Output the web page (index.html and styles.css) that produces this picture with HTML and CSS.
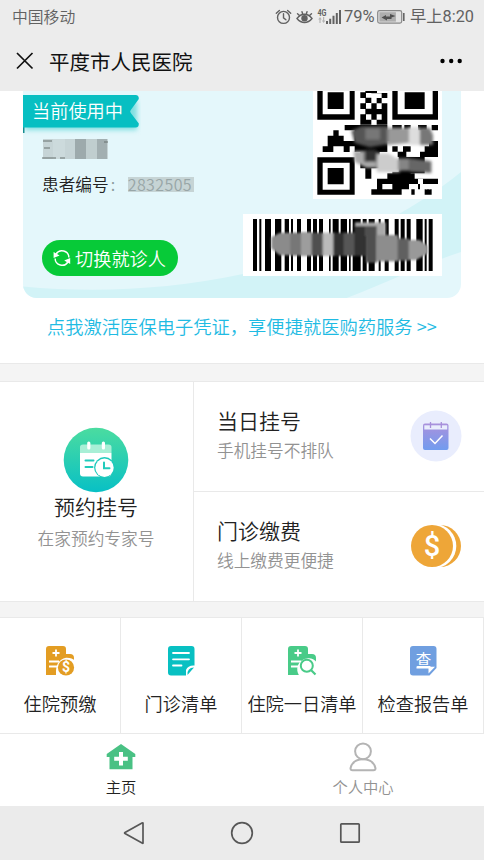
FILE: index.html
```html
<!DOCTYPE html>
<html lang="zh-CN">
<head>
<meta charset="utf-8">
<title>平度市人民医院</title>
<link rel="stylesheet" href="styles.css">
</head>
<body>
<div class="phone">
  <header class="top">
    <div class="status">
      <span class="carrier">中国移动</span>
      <svg class="status-icons" width="68" height="20" viewBox="0 0 68 20">
        <g fill="none" stroke="#616161" stroke-width="1.4" stroke-linecap="round">
          <circle cx="10.5" cy="10.4" r="6"/>
          <path d="M10.5 6.8v4l2.4 2"/>
          <path d="M3.3 6.3 6.4 3.4M17.7 6.3 14.6 3.4"/>
          <path d="M24 11.5c4.400-5.600 10.600-5.600 15 0-4.400 5.400-10.600 5.400-15 0z"/>
          <path d="M24.500 6.800l2 1.800M29 4.700l.6 2M34 4.700l-.6 2M38.500 6.800l-2 1.800"/>
        </g>
        <circle cx="31.500" cy="11.300" r="3.200" fill="#616161"/>
        <text x="44.5" y="8.5" class="net" textLength="9" lengthAdjust="spacingAndGlyphs">4G</text>
        <g fill="#b5b5b5"><path d="M47 10l1.800 2.400H47.600V16h-1.200v-3.600h-1.200zM50.600 16l-1.800-2.400h1.200V10h1.200v3.600h1.200z"/></g>
        <g fill="#616161">
          <path d="M53 14h2v3h-2zM56.200 11.700h2V17h-2zM59.500 8.700h2V17h-2zM62.800 6h2v11h-2zM66 3h2v14h-2z"/>
        </g>
      </svg>
      <span class="percent">79%</span>
      <svg class="battery" width="28" height="14" viewBox="0 0 28 14">
        <rect x=".7" y=".7" width="24" height="12.400" rx="1.800" fill="#e2e2e2" stroke="#888" stroke-width="1.200"/>
        <rect x="2.400" y="2.200" width="16.500" height="9.400" fill="#adadad"/>
        <path d="M4.500 7.500l4.500-2.500v1.500h4V4l5.500 2-4 1.500V9H10v1.500z" fill="#505050"/>
        <rect x="26" y="3" width="1.600" height="8" fill="#666"/>
      </svg>
      <span class="clock">早上8:20</span>
    </div>
    <div class="titlebar">
      <svg width="18" height="18" viewBox="0 0 18 18"><path d="M1 1 16.500 16.500M16.500 1 1 16.500" stroke="#111" stroke-width="1.700" fill="none"/></svg>
      <h1>平度市人民医院</h1>
      <svg class="more" width="24" height="6" viewBox="0 0 24 6"><circle cx="3.500" cy="3" r="2.200"/><circle cx="12.200" cy="3" r="2.200"/><circle cx="20.700" cy="3" r="2.200"/></svg>
    </div>
  </header>

  <section class="patient">
    <div class="card">
      <svg class="waves" width="438" height="208" viewBox="0 0 438 208">
        <path fill="#d2f3f7" d="M0 195.500C70 202 145 199 220 183 300 165 380 128 438 81V161C400 173 362 193 321 208H0z"/>
      </svg>
      <div class="card-left">
        <div class="ribbon">
          <svg width="118" height="50" viewBox="0 0 118 50">
            <defs><filter id="soft" x="-10%" y="-20%" width="120%" height="160%"><feGaussianBlur stdDeviation="2.500"/></filter></defs>
            <path d="M2 10H114V39H2z" fill="#7fdfe0" filter="url(#soft)"/>
            <path d="M0 36H1.500V42H0z" fill="#158d91"/>
            <path d="M0 4H112.500Q116 4 115.800 8L107.800 19Q106.500 20.500 107.800 22L115.800 32.500Q116 36.500 112.500 36.500H0z" fill="#07bfc2"/>
          </svg>
          <span>当前使用中</span>
        </div>
        <svg class="name-mask" width="68" height="22" viewBox="0 0 68 22">
          <rect x="1" y="1" width="65" height="20" fill="#c6d4d6"/>
          <rect x="11" y="1" width="12" height="20" fill="#ccdadc"/>
          <rect x="33" y="1" width="11" height="20" fill="#9daaac"/>
          <rect x="44" y="1" width="11" height="20" fill="#c0cecf"/>
          <rect x="55" y="1" width="10" height="20" fill="#a2afb1"/>
          <path d="M1 3h9M2 10h6M0 20h14M18 20h5M62 4h4" stroke="#66706f" stroke-width="1"/>
        </svg>
        <div class="number">患者编号<i>:</i><span class="digits">2832505</span></div>
        <button class="switch">
          <svg width="18" height="18" viewBox="0 0 18 18"><g fill="none" stroke="#fff" stroke-width="1.400"><path d="M3 5A7 7 0 0 1 15.900 8.500"/><path d="M15 13A7 7 0 0 1 2.100 9.500"/></g><path d="M.6 3v6l6-2.500zM17.200 15V9l-6 2.500z" fill="#fff"/></svg>
          <span>切换就诊人</span>
        </button>
      </div>
      <div class="card-right">
        <svg class="qr" width="129" height="109" viewBox="40 15 387 327">
          <defs><filter id="haze" x="-10%" y="-20%" width="120%" height="140%"><feGaussianBlur stdDeviation="5"/></filter></defs>
          <rect x="40" y="15" width="388" height="328" fill="#fff"/>
          <path fill-rule="evenodd" d="M53 10H165V104H53zM69 10H150V88H69zM278 10H415V104H278zM294 10H399V88H294zM53 217H165V329H53zM69 233H150V314H69z"/>
          <path d="M84 22H132V72H84zM315 22H375V72H315zM84 249H132V298H84z"/>
          <path fill-rule="evenodd" d="M182 22H197V15H232V24H263V39H246V55H263V119H182V88H197V72H182V55H197V39H182zM199 24V38H215V54H199V71H215V55H231V72H246V55H231V39H246V25H215V24zM199 88V104H215V88zM231 88V104H246V88zM215 104V119H231V104z"/>
          <path d="M135 120H165V136H135zM101 136H117V152H132V168H165V184H150V201H132V184H101V201H69V184H84V152H101zM165 120H263V201H165zM278 120H306V136H278zM314 120H333V136H314zM355 120H381V136H355zM396 120H415V136H396zM263 136H300V168H263zM388 168H415V216H361V200H375V184H388zM278 184H294V200H278zM310 184H333V200H320V216H294V200H310zM182 201H240V250H182zM197 250H215V281H197zM297 216H375V265H297z"/>
          <path d="M263 265H278V260H333V265H345V281H415V297H388V313H375V329H396V313H382V297H361V313H345V329H335V313H355V297H328V313H306V329H215V313H232V281H263zM248 297V313H278V297z" fill-rule="evenodd"/>
          <path fill="#fff" d="M355 281H370V297H355zM378 297H392V313H378z"/>
          <g filter="url(#haze)">
            <path fill="#555" d="M155 137 185 124H263V178L210 187 165 174z"/>
            <path fill="#777" d="M197 130H241V164H197z"/>
            <path fill="#999" d="M263 128H328V174L263 180z"/>
            <path fill="#ddd" d="M328 126H358V180H328z"/>
            <path fill="#777" d="M360 128H390L400 150V180H360z"/>
            <path fill="#aaa" d="M162 198H195V230L230 220V248H200L165 230z"/>
            <path fill="#303030" d="M197 194H230V230H197z"/>
            <path fill="#ccc" d="M231 205H265L300 225V262H231z"/>
            <path fill="#858585" d="M295 220H330V257H295z"/>
            <path fill="#666" d="M330 220 395 229V264L330 260z"/>
          </g>
        </svg>
        <svg class="barcode" width="199" height="62" viewBox="40 42 597 186">
          <rect x="40" y="42" width="600" height="188" fill="#fff"/>
          <path d="M70 57h12v156h-12zM89 57h6v156h-6zM106 57h18v156h-18zM136 57h19v156h-19zM165 57h13v156h-13zM184 57h6v156h-6zM202 57h12v156h-12zM232 57h12v156h-12zM250 57h12v156h-12zM268 57h12v156h-12zM298 57h5v156h-5zM309 57h18v156h-18zM333 57h19v156h-19zM358 57h5v156h-5zM369 57h24v156h-24zM399 57h12v156h-12zM417 57h18v156h-18zM447 57h6v156h-6zM465 57h12v156h-12zM495 57h12v156h-12zM513 57h12v156h-12zM531 57h12v156h-12zM560 57h19v156h-19zM585 57h6v156h-6zM597 57h12v156h-12z"/>
          <defs><filter id="smear" x="-5%" y="-10%" width="110%" height="120%"><feGaussianBlur stdDeviation="3"/></filter></defs>
          <g filter="url(#smear)">
            <path fill="#8b8b8b" d="M125 112 150 98H184V166H150L125 145z"/>
            <path fill="#777" d="M182 98H216V167H182z"/><path fill="#9d9d9d" d="M214 96H248V168H214z"/>
            <path fill="#505050" d="M246 98H281V168H246z"/><path fill="#bababa" d="M279 98H313V168H279z"/>
            <path fill="#303030" d="M311 98H344V168H311z"/><path fill="#565656" d="M342 98H376V168H342z"/>
            <path fill="#aaa" d="M376 67H468V108H376z"/><path fill="#303030" d="M374 78H408V168H374z"/>
            <path fill="#505050" d="M408 78H441V188H408z"/><path fill="#8d8d8d" d="M440 105H505V184H440z"/>
            <path fill="#606060" d="M504 115H538V182H504z"/><path fill="#999" d="M537 120 570 120 594 138V160L560 180H537z"/>
          </g>
        </svg>
      </div>
    </div>
    <a class="activate">点我激活医保电子凭证，享便捷就医购药服务 &gt;&gt;</a>
  </section>

  <section class="booking">
    <div class="reserve">
      <svg width="66" height="66" viewBox="0 0 66 66">
        <defs><linearGradient id="mint" x2="0" y2="1"><stop stop-color="#4bdca0"/><stop offset="1" stop-color="#08c0c5"/></linearGradient></defs>
        <circle cx="33" cy="33" r="32.300" fill="url(#mint)"/>
        <path d="M17 26H48.500V46.500Q48.500 49.500 45.500 49.500H20Q17 49.500 17 46.500z" fill="#fff"/>
        <path d="M17 26V20Q17 17.500 20 17.500H45.500Q48.500 17.500 48.500 20V26z" fill="#a8efd6"/>
        <rect x="24.200" y="14.500" width="3.200" height="8" rx="1.500" fill="#fff"/><rect x="38.800" y="14.500" width="3.200" height="8" rx="1.500" fill="#fff"/>
        <path d="M22.500 33.500h8M22.500 40h7" stroke="#20cbbb" stroke-width="2" stroke-linecap="round"/>
        <circle cx="41.500" cy="40.500" r="10.400" fill="#1ccabc"/><circle cx="41.500" cy="40.800" r="9.200" fill="#fff"/>
        <path d="M41 35.500V41.300H46.500" fill="none" stroke="#20cbbb" stroke-width="2" stroke-linecap="round"/>
      </svg>
      <h2>预约挂号</h2>
      <p>在家预约专家号</p>
    </div>
    <div class="pair">
      <div class="entry">
        <div><h2>当日挂号</h2><p>手机挂号不排队</p></div>
        <svg width="52" height="52" viewBox="0 0 52 52">
          <defs><linearGradient id="violet" x2="0" y2="1"><stop stop-color="#aa91dc"/><stop offset="1" stop-color="#719cef"/></linearGradient></defs>
          <circle cx="26" cy="26" r="25.500" fill="#e9edfd"/>
          <rect x="13" y="13.500" width="25.500" height="26.500" rx="2" fill="url(#violet)"/>
          <path d="M14.300 15.300H37.200V19.500H14.300z" fill="#e9edfd"/>
          <path d="M20.500 12v6M31.300 12v6" stroke="#a78fda" stroke-width="1.300"/>
          <path d="M20 28.500l5 5 7.500-8" fill="none" stroke="#fff" stroke-width="1.500"/>
        </svg>
      </div>
      <div class="entry">
        <div><h2>门诊缴费</h2><p>线上缴费更便捷</p></div>
        <svg width="52" height="52" viewBox="0 0 52 52">
          <circle cx="30" cy="26" r="21" fill="#eea638"/>
          <circle cx="24" cy="26" r="22.300" fill="#fff"/>
          <circle cx="22" cy="26" r="21" fill="#eea638"/>
          <text x="22" y="35.500" class="coin">$</text>
        </svg>
      </div>
    </div>
  </section>

  <section class="services">
    <div class="service">
      <svg width="30" height="32" viewBox="0 0 30 32">
        <path d="M1 4Q1 1 4 1H18Q21 1 21 4V9H25Q29 9 29 13V30H1z" fill="#e39d23"/>
        <path d="M11 30Q10 15 21 12.800 27 12.500 30 16V32H12z" fill="#fff"/>
        <path d="M11 4.500v7M7.500 8h7M4 16.500H14M4 21.500H12" stroke="#fff" stroke-width="1.800"/>
        <circle cx="21" cy="22.500" r="8.100" fill="#e39d23"/><text x="21" y="27.300" class="dollar">$</text>
      </svg><span>住院预缴</span>
    </div>
    <div class="service">
      <svg width="30" height="32" viewBox="0 0 30 32">
        <path d="M2 4Q2 1 5 1H25.500Q28.500 1 28.500 4V20.500Q22 20 20 25V30.500H5Q2 30.500 2 27.500zM28 22.500 21.500 30Q21 22.500 28 22.500z" fill="#08c0c2"/>
        <path d="M7 8H23M7 14.300H23M7 20.500H15.500" stroke="#fff" stroke-width="1.800" stroke-linecap="round"/>
      </svg><span>门诊清单</span>
    </div>
    <div class="service">
      <svg width="30" height="32" viewBox="0 0 30 32">
        <path d="M1 4Q1 1 4 1H18Q21 1 21 4V9H25Q29 9 29 13V30H1z" fill="#49cb88"/>
        <path d="M11 4.500v7M7.500 8h7M4 16.500H14M4 21.500H12" stroke="#fff" stroke-width="1.800"/>
        <path d="M13 31.500A10 10 0 1 1 29.500 17V31.500z" fill="#fff"/>
        <circle cx="19.800" cy="20.800" r="6" fill="none" stroke="#49cb88" stroke-width="2"/><path d="M24 25 28.500 29.500" stroke="#49cb88" stroke-width="2.200"/>
      </svg><span>住院一日清单</span>
    </div>
    <div class="service">
      <svg width="30" height="32" viewBox="0 0 30 32">
        <path d="M2 4Q2 1 5 1H25.500Q28.500 1 28.500 4V23L21.500 30.500H5Q2 30.500 2 27.500z" fill="#709fe0"/>
        <path d="M8.500 21.800H27L20.500 28.500V23.400H8.500z" fill="#fff"/>
        <text x="15.500" y="20.500" class="check">查</text>
      </svg><span>检查报告单</span>
    </div>
  </section>

  <nav class="tabs">
    <div class="tab active">
      <svg width="30" height="30" viewBox="0 0 30 30"><path d="M15 2 29.300 12V15H26.500V27.200H3.500V15H.7V12z" fill="#49c184"/><path d="M15 10V23.500M8.200 16.800H21.800" stroke="#fff" stroke-width="4"/></svg>
      <span>主页</span>
    </div>
    <div class="tab">
      <svg width="30" height="30" viewBox="0 0 30 30"><g fill="none" stroke="#b4b4b4" stroke-width="2"><circle cx="15" cy="9.300" r="7.900"/><path d="M2.500 26.200C4 20 8.500 17.300 15 17.300S26 20 27.500 26.200Q27.500 28.200 25.500 28.200H4.500Q2.500 28.200 2.500 26.200z"/></g></svg>
      <span>个人中心</span>
    </div>
  </nav>

  <footer class="keys">
    <svg width="22" height="24" viewBox="0 0 22 24"><path d="M20 2V22Q20 22.500 19.500 22.300L2 12.500Q1.200 12 2 11.500L19 2Q20 1.500 20 2z" fill="none" stroke="#575757" stroke-width="1.700"/></svg>
    <svg width="24" height="24" viewBox="0 0 24 24"><circle cx="12" cy="12" r="10.300" fill="none" stroke="#575757" stroke-width="1.700"/></svg>
    <svg width="22" height="24" viewBox="0 0 22 24"><rect x="1.800" y="2.800" width="18.400" height="18.400" rx=".8" fill="none" stroke="#575757" stroke-width="1.700"/></svg>
  </footer>
</div>
</body>
</html>
```
FILE: styles.css
```css
* { box-sizing: border-box; }
body {
  margin: 0;
  background: #fff;
  font-family: "Noto Sans CJK SC", sans-serif;
  font-weight: 350;
  color: #222;
}
h1, h2, p { margin: 0; font-weight: inherit; }
svg { display: block; flex: none; }
.phone { width: 484px; height: 860px; overflow: hidden; display: flex; flex-direction: column; background: #f4f4f4; }

.top { height: 91px; flex: none; background: #ececec; }
.status { height: 33px; display: flex; align-items: center; padding: 0 10px 0 12px; color: #616161; font-size: 15.8px; line-height: 33px; }
.carrier { flex: 1; }
.status-icons { margin-right: 3px; }
.net { font: 700 8.500px Roboto, sans-serif; fill: #616161; }
.percent { font-family: Roboto, sans-serif; font-size: 16.500px; font-weight: 400; width: 33px; }
.battery { margin-right: 5px; }
.clock { font-family: Roboto, "Noto Sans CJK SC", sans-serif; font-size: 16.300px; font-weight: 400; }
.titlebar { height: 57px; display: flex; align-items: center; padding: 0 21px 1px 16px; }
.titlebar h1 { flex: 1; margin-left: 15px; font-size: 20.500px; line-height: 30px; font-weight: 400; color: #111; }

.patient { height: 273px; flex: none; background: #fff; padding: 0 23px; border-bottom: 1px solid #e9e9e9; }
.card { position: relative; height: 207px; display: flex; justify-content: space-between; background: #e4f7fb; border-radius: 0 0 14px 14px; overflow: hidden; }
.waves { position: absolute; left: 0; top: 0; }
.card-left { position: relative; }
.ribbon { display: grid; height: 47px; }
.ribbon > * { grid-area: 1 / 1; }
.ribbon span { position: relative; margin-left: 9px; font-size: 18.200px; line-height: 38px; color: #fff; }
.name-mask { margin-left: 19px; }
.number { display: flex; align-items: center; margin: 10px 0 0 19px; font-size: 16.700px; line-height: 28px; color: #222; }
.number i { width: 19px; padding-left: 2px; font-style: normal; color: #8b9a9c; }
.digits { width: 66px; height: 15px; font-size: 16px; letter-spacing: .4px; line-height: 14px; background: #c6d4d5; color: #98a6a7; }
.switch { display: flex; align-items: center; width: 136px; height: 36px; margin: 42px 0 0 19px; padding: 0 0 0 11px; border: 0; border-radius: 18px; background: #07ca38; color: #fff; font: 350 18.200px/36px "Noto Sans CJK SC", sans-serif; }
.switch span { margin-left: 4px; white-space: nowrap; }
.card-right { position: relative; display: flex; flex-direction: column; align-items: flex-end; padding-right: 19px; }
.qr { margin-top: -1px; }
.barcode { margin-top: 15px; }
.activate { display: block; margin-left: 24px; font-size: 18.300px; line-height: 56px; white-space: nowrap; color: #1fbbe3; }

.booking { height: 221px; flex: none; display: flex; margin-top: 17px; background: #fff; border: solid #e9e9e9; border-width: 1px 0; }
.booking h2 { font-size: 21px; line-height: 30px; color: #222; }
.booking p { font-size: 16.700px; line-height: 28px; color: #929292; }
.reserve { width: 193px; display: flex; flex-direction: column; align-items: center; padding: 45px 1px 0 0; }
.reserve h2 { margin: -2px 0 3px; }
.pair { flex: 1; display: flex; flex-direction: column; border-left: 1px solid #e9e9e9; }
.entry { height: 109px; display: flex; justify-content: space-between; align-items: center; padding: 0 22px 1px 23px; }
.entry > div { padding-bottom: 4px; }
.entry h2 { margin-bottom: 1px; }
.entry + .entry { height: 110px; border-top: 1px solid #e9e9e9; }

.services { height: 117px; flex: none; display: grid; grid-template-columns: repeat(4, 121px); margin-top: 15px; background: #fff; border: solid #e9e9e9; border-width: 1px 0; }
.service { display: flex; flex-direction: column; align-items: center; padding-top: 27px; border-right: 1px solid #e9e9e9; }
.service span { margin-top: 11px; font-size: 18.200px; line-height: 30px; white-space: nowrap; }
.coin { font: 500 29px Roboto, sans-serif; fill: #fff; text-anchor: middle; }
.dollar { font: 700 14px Roboto, sans-serif; fill: #fff; text-anchor: middle; }
.check { font: 400 15.500px "Noto Sans CJK SC", sans-serif; fill: #fff; text-anchor: middle; }

.tabs { height: 72px; flex: none; display: flex; background: #fff; }
.tab { flex: 1; display: flex; flex-direction: column; align-items: center; padding-top: 8px; color: #929292; }
.tab span { margin-top: 2px; font-size: 15.300px; line-height: 24px; }
.active { color: #222; }
.keys { height: 54px; flex: none; display: flex; justify-content: center; gap: 85px; padding-top: 15px; background: #ebebeb; }
```
